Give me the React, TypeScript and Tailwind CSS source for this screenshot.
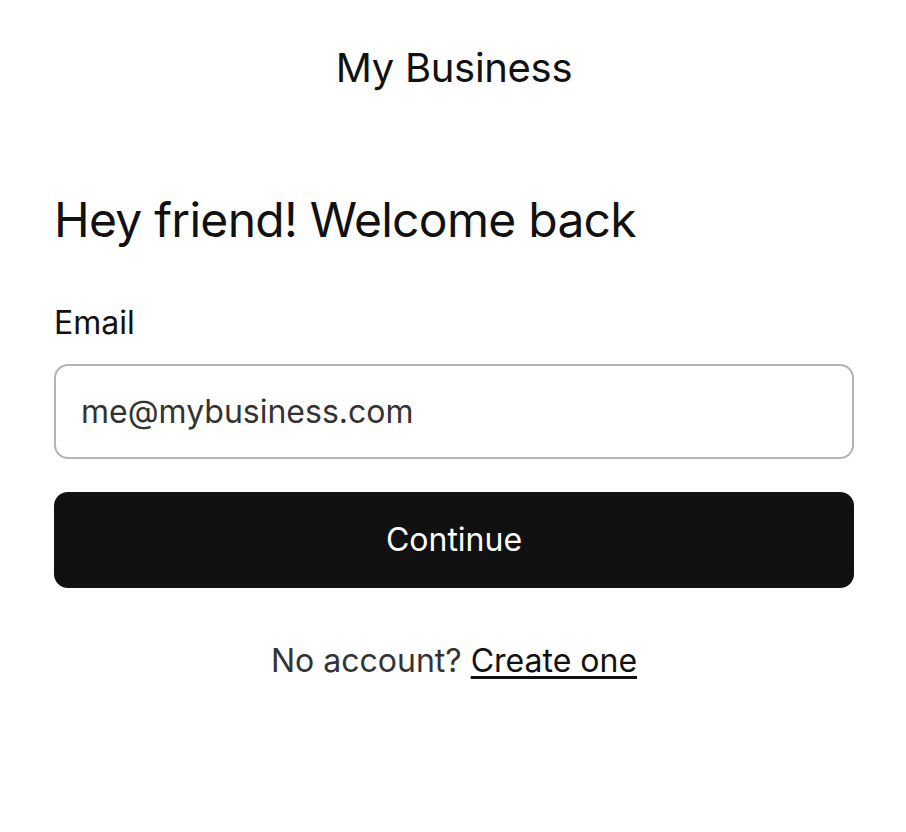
export default function App() {
  return (
    <div className="min-h-screen bg-white pl-[54px] pr-[52px] text-[#111] [font-family:Inter,'Noto_Sans',sans-serif]">
      <header className="flex justify-center pt-[40px]">
        <h1 className="text-[40px] leading-[56px] tracking-[-0.008em]">My Business</h1>
      </header>

      <main className="mt-[96px]">
        <h2 className="text-[48px] leading-[56px] tracking-[-0.015em]">Hey friend! Welcome back</h2>

        <form className="mt-[55px] flex flex-col" onSubmit={(e) => e.preventDefault()}>
          <label htmlFor="email" className="text-[32px] leading-[40px]">
            Email
          </label>
          <input
            id="email"
            type="email"
            placeholder="me@mybusiness.com"
            className="mt-[21px] h-[95px] w-full rounded-[14px] border-2 border-[#b3b3b3] px-[25px] text-[32px] text-[#333] outline-none placeholder:text-[#333]"
          />
          <button
            type="submit"
            className="mt-[33px] h-[96px] w-full rounded-[14px] bg-[#111] text-[32px] text-white"
          >
            Continue
          </button>
        </form>

        <p className="mt-[51px] text-center text-[32px] leading-[44px] text-[#333]">
          No account?{' '}
          <a href="#" className="text-[#111] underline decoration-[3px] underline-offset-[4px]">
            Create one
          </a>
        </p>
      </main>
    </div>
  );
}
